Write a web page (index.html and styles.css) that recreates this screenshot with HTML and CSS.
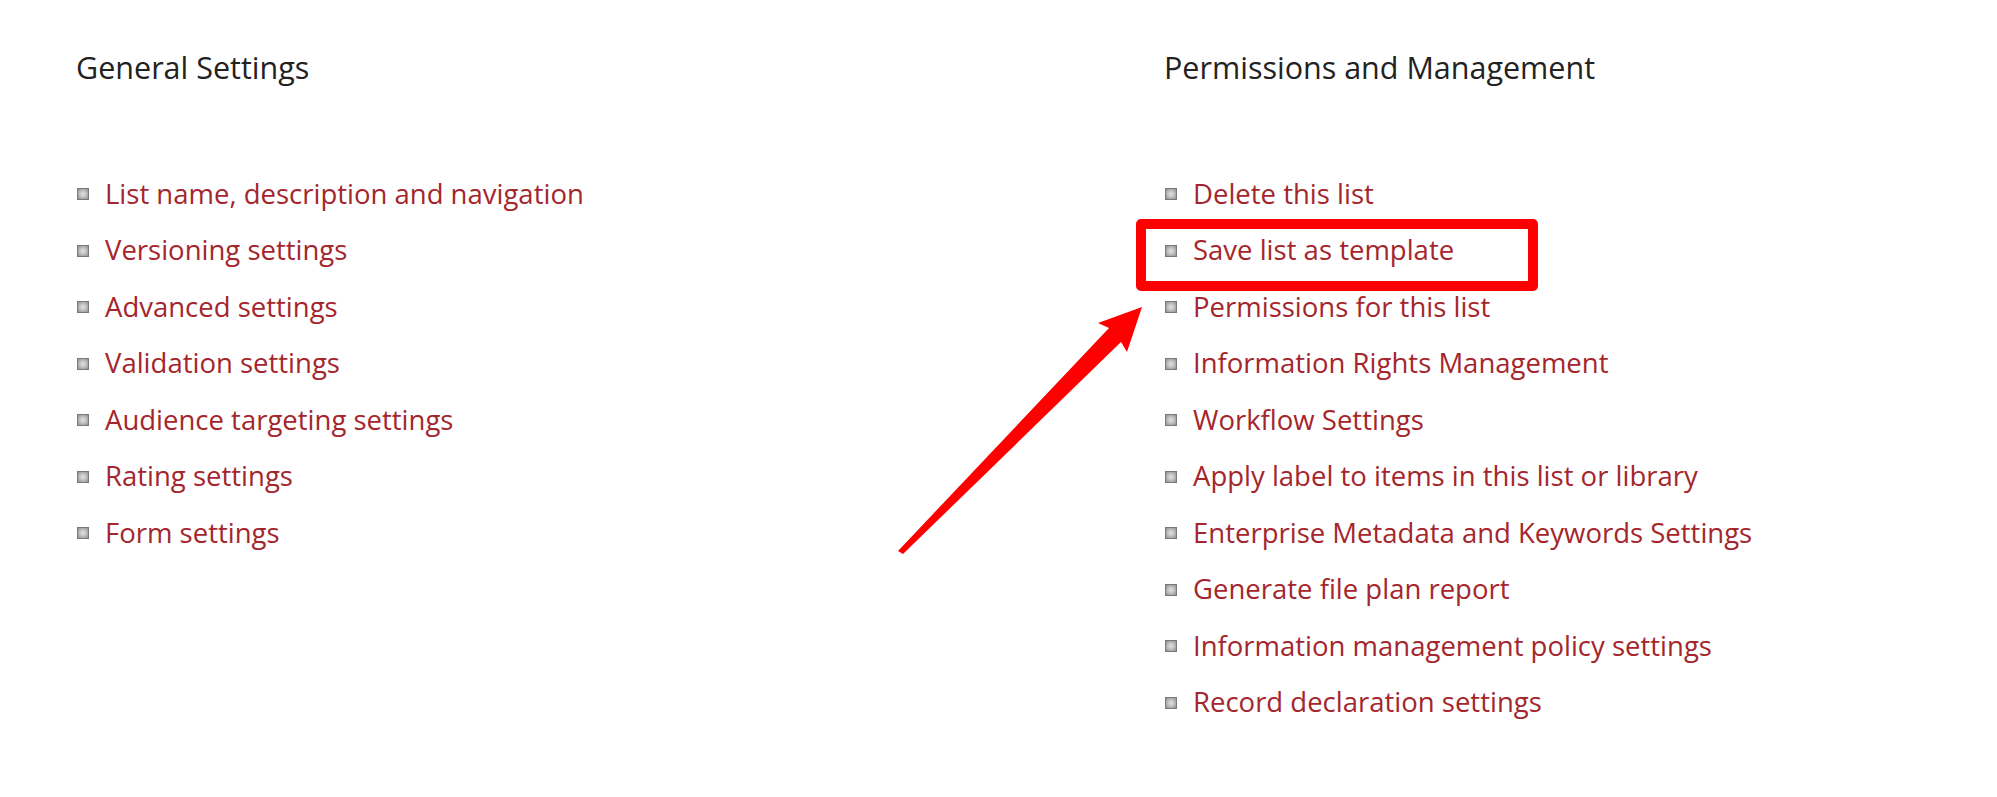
FILE: index.html
```html
<!DOCTYPE html>
<html lang="en">
<head>
  <meta charset="UTF-8" />
  <title>List Settings</title>
  <link rel="stylesheet" href="styles.css">
</head>
<body>
  <div class="page">
    <section class="group">
      <h2>General Settings</h2>
      <ul class="links">
        <li><a href="#">List name, description and navigation</a></li>
        <li><a href="#">Versioning settings</a></li>
        <li><a href="#">Advanced settings</a></li>
        <li><a href="#">Validation settings</a></li>
        <li><a href="#">Audience targeting settings</a></li>
        <li><a href="#">Rating settings</a></li>
        <li><a href="#">Form settings</a></li>
      </ul>
    </section>

    <section class="group">
      <h2>Permissions and Management</h2>
      <ul class="links">
        <li><a href="#">Delete this list</a></li>
        <li class="marked"><a href="#">Save list as template</a></li>
        <li><a href="#">Permissions for this list</a></li>
        <li><a href="#">Information Rights Management</a></li>
        <li><a href="#">Workflow Settings</a></li>
        <li><a href="#">Apply label to items in this list or library</a></li>
        <li><a href="#">Enterprise Metadata and Keywords Settings</a></li>
        <li><a href="#">Generate file plan report</a></li>
        <li><a href="#">Information management policy settings</a></li>
        <li><a href="#">Record declaration settings</a></li>
      </ul>
    </section>

    <!-- annotation arrow pointing at the marked link -->
    <svg class="arrow" viewBox="0 0 1997 797" width="1997" height="797">
      <polygon fill="#ff0000" points="898,551 1109,328 1098,323 1142,307 1127,352 1121,342 903,554" />
    </svg>
  </div>
</body>
</html>
```

FILE: styles.css
```css
body {
  margin: 0;
  background-color: #ffffff;
  font-family: "Open Sans", "Noto Sans", sans-serif;
}
.page {
  position: relative;
  display: grid;
  grid-template-columns: 1088px 1fr;
  padding-left: 76px;
  height: 797px;
  box-sizing: border-box;
}
h2 {
  margin: 47px 0 0;
  font-size: 30.5px;
  font-weight: 400;
  line-height: 40px;
  color: #222222;
}
.links {
  list-style: none;
  margin: 78px 0 0;
  padding: 0;
}
.links li {
  position: relative;
  display: flex;
  align-items: center;
  height: 56.5px;
  font-size: 27.5px;
}
.links li::before {
  content: "";
  width: 10px;
  height: 10px;
  margin: 2px 16px 0 1px;
  border: 1px solid #7a7a7a;
  background: radial-gradient(circle, #e4e4e4 0%, #b4b4b4 60%, #8a8a8a 100%);
  flex: none;
}
.links a {
  color: #a4262c;
  text-decoration: none;
}
.marked::after {
  content: "";
  position: absolute;
  left: -28px;
  top: -3px;
  width: 382px;
  height: 52px;
  border: 10px solid #ff0000;
  border-radius: 5px;
  pointer-events: none;
}
.arrow {
  position: absolute;
  left: 0;
  top: 0;
  pointer-events: none;
}
```
